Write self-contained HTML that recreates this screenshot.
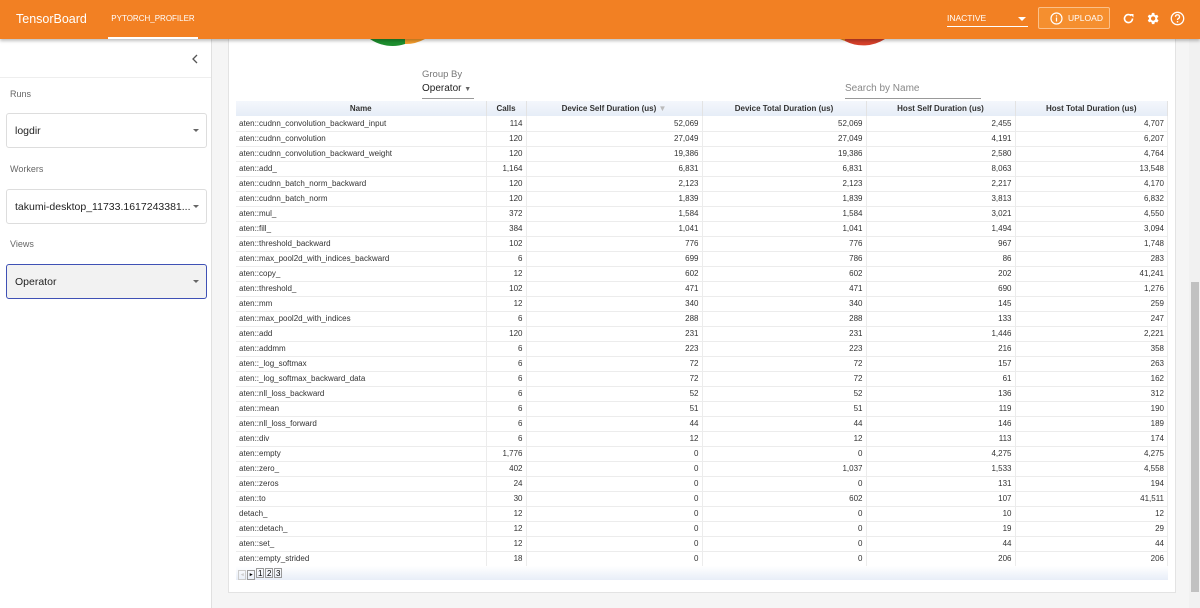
<!DOCTYPE html>
<html><head><meta charset="utf-8"><style>
*{box-sizing:border-box;margin:0;padding:0}
body{width:1200px;height:608px;overflow:hidden;background:#f5f5f5;font-family:"Liberation Sans",Arial,sans-serif;position:relative}
.hdr{position:absolute;left:0;top:0;width:1200px;height:39px;background:#f28023;box-shadow:0 2px 3px rgba(0,0,0,.25);z-index:5;color:#fff}
.logo{position:absolute;left:16px;top:12px;font-size:12.5px}
.tab{position:absolute;left:108px;top:0;width:90px;height:39px;font-size:8px;text-align:center;line-height:38px;border-bottom:2px solid #fff}
.inact{position:absolute;left:947px;top:13px;width:81px;height:14px;border-bottom:1px solid #fff;font-size:8.5px}
.inact:after{content:"";position:absolute;right:2px;top:4px;border:4px solid transparent;border-top-color:#fff}
.upl{position:absolute;left:1038px;top:7px;width:72px;height:22px;border:1px solid #fbc08a;background:#f58f2f;border-radius:2px;font-size:8.5px;line-height:20px;padding-left:29px}
.side{position:absolute;left:0;top:39px;width:212px;height:569px;background:#fff;border-right:1px solid #e0e0e0}
.lbl{position:absolute;left:10px;font-size:9px;color:#666}
.sel{position:absolute;left:6px;width:201px;height:35px;border:1px solid #ddd;border-radius:3px;font-size:10.5px;color:#222;line-height:35px;padding-left:8px}
.sel:after{content:"";position:absolute;right:7px;top:15px;border:3.5px solid transparent;border-top-color:#666}
.card{position:absolute;left:228px;top:39px;width:948px;height:554px;background:#fff;border:1px solid #e3e3e3;border-top:none}
table{position:absolute;left:236px;top:101px;width:932px;border-collapse:collapse;font-size:8px;color:#333}
th{height:15px;background:linear-gradient(#f4f7fc,#e6edf7);font-weight:bold;border-right:1px solid #e3e3e3;color:#333}
td{height:15px;border-bottom:1px solid #ececec;border-right:1px solid #ececec;padding:0 3px;text-align:right}
td:first-child{text-align:left}
.pg{position:absolute;left:236px;top:566px;width:932px;height:14px;background:linear-gradient(#fff,#e8eef8);font-size:8px}
.pg span{display:inline-block;border:1px solid #999;width:8px;height:10px;margin-top:2px;text-align:center;line-height:9px;margin-right:1px}
.sb{position:absolute;left:1189px;top:39px;width:11px;height:569px;background:#f1f1f1}
.th{position:absolute;left:1191px;top:282px;width:8px;height:310px;background:#c1c1c1}
</style></head><body>
<div class="hdr">
<div class="logo">TensorBoard</div>
<div class="tab">PYTORCH_PROFILER</div>
<div class="inact">INACTIVE</div>
<div class="upl"><svg style="position:absolute;left:11px;top:4px" width="13" height="13" viewBox="0 0 13 13"><circle cx="6.5" cy="6.5" r="5.5" fill="none" stroke="#fff" stroke-width="1.2"/><rect x="5.9" y="5.5" width="1.2" height="4" fill="#fff"/><rect x="5.9" y="3.3" width="1.2" height="1.2" fill="#fff"/></svg>UPLOAD</div>
<svg style="position:absolute;left:1122px;top:12px" width="13" height="13" viewBox="0 0 13 13"><path d="M10.5 6.5A4 4 0 1 1 9.3 3.7" fill="none" stroke="#fff" stroke-width="1.6"/><path d="M8 2h3.5v3.5z" fill="#fff"/></svg>
<svg style="position:absolute;left:1145px;top:11px" width="15" height="15" viewBox="0 0 24 24"><path fill="#fff" d="M19.4 13a7.5 7.5 0 0 0 0-2l2.1-1.6-2-3.5-2.5 1a7 7 0 0 0-1.7-1L15 3h-4l-.4 2.7a7 7 0 0 0-1.7 1l-2.5-1-2 3.5L6.5 11a7.5 7.5 0 0 0 0 2l-2.1 1.6 2 3.5 2.5-1a7 7 0 0 0 1.7 1L11 21h4l.4-2.7a7 7 0 0 0 1.7-1l2.5 1 2-3.5zM13 15.5a3.5 3.5 0 1 1 0-7 3.5 3.5 0 0 1 0 7z"/></svg>
<svg style="position:absolute;left:1170px;top:11px" width="15" height="15" viewBox="0 0 15 15"><circle cx="7.5" cy="7.5" r="6.2" fill="none" stroke="#fff" stroke-width="1.3"/><path d="M5.5 5.8a2 2 0 1 1 2.8 1.8c-.6.3-.8.7-.8 1.4" fill="none" stroke="#fff" stroke-width="1.3"/><circle cx="7.5" cy="10.8" r=".8" fill="#fff"/></svg>
</div>
<div class="side">
<svg style="position:absolute;left:191px;top:15px" width="8" height="10" viewBox="0 0 8 10"><path d="M6 1L2 5l4 4" fill="none" stroke="#555" stroke-width="1.3"/></svg>
<div style="position:absolute;left:0;top:38px;width:211px;border-top:1px solid #eee"></div>
<div class="lbl" style="top:50px">Runs</div>
<div class="sel" style="top:74px">logdir</div>
<div class="lbl" style="top:125px">Workers</div>
<div class="sel" style="top:150px">takumi-desktop_11733.1617243381...</div>
<div class="lbl" style="top:200px">Views</div>
<div class="sel" style="top:225px;border:1px solid #3f51b5;background:#f2f2f2">Operator</div>
</div>
<div class="card"></div>
<svg style="position:absolute;left:350px;top:39px" width="600" height="8"><path d="M20 0A40 40 0 0 0 55 5L55 0z" fill="#1e8e2e"/><path d="M55 0L55 5A40 40 0 0 0 75 0z" fill="#f39c2c"/><path d="M490 0A40 40 0 0 0 495 2L495 0z" fill="#e8901e"/><path d="M495 0L495 2A40 40 0 0 0 535 0z" fill="#d5402a"/></svg>
<div style="position:absolute;left:422px;top:69px;font-size:9.5px;color:#777">Group By</div>
<div style="position:absolute;left:422px;top:83px;width:52px;height:16px;border-bottom:1px solid #999;font-size:10px;color:#222">Operator <span style="font-size:7px;color:#666">▼</span></div>
<div style="position:absolute;left:845px;top:83px;width:136px;height:16px;border-bottom:1px solid #999;font-size:10px;color:#888">Search by Name</div>
<table>
<tr><th style="width:250px">Name</th><th style="width:40px">Calls</th><th style="width:176px">Device Self Duration (us) <span style="color:#bbb">▼</span></th><th style="width:164px">Device Total Duration (us)</th><th style="width:149px">Host Self Duration (us)</th><th>Host Total Duration (us)</th></tr>
<tr><td>aten::cudnn_convolution_backward_input</td><td>114</td><td>52,069</td><td>52,069</td><td>2,455</td><td>4,707</td></tr>
<tr><td>aten::cudnn_convolution</td><td>120</td><td>27,049</td><td>27,049</td><td>4,191</td><td>6,207</td></tr>
<tr><td>aten::cudnn_convolution_backward_weight</td><td>120</td><td>19,386</td><td>19,386</td><td>2,580</td><td>4,764</td></tr>
<tr><td>aten::add_</td><td>1,164</td><td>6,831</td><td>6,831</td><td>8,063</td><td>13,548</td></tr>
<tr><td>aten::cudnn_batch_norm_backward</td><td>120</td><td>2,123</td><td>2,123</td><td>2,217</td><td>4,170</td></tr>
<tr><td>aten::cudnn_batch_norm</td><td>120</td><td>1,839</td><td>1,839</td><td>3,813</td><td>6,832</td></tr>
<tr><td>aten::mul_</td><td>372</td><td>1,584</td><td>1,584</td><td>3,021</td><td>4,550</td></tr>
<tr><td>aten::fill_</td><td>384</td><td>1,041</td><td>1,041</td><td>1,494</td><td>3,094</td></tr>
<tr><td>aten::threshold_backward</td><td>102</td><td>776</td><td>776</td><td>967</td><td>1,748</td></tr>
<tr><td>aten::max_pool2d_with_indices_backward</td><td>6</td><td>699</td><td>786</td><td>86</td><td>283</td></tr>
<tr><td>aten::copy_</td><td>12</td><td>602</td><td>602</td><td>202</td><td>41,241</td></tr>
<tr><td>aten::threshold_</td><td>102</td><td>471</td><td>471</td><td>690</td><td>1,276</td></tr>
<tr><td>aten::mm</td><td>12</td><td>340</td><td>340</td><td>145</td><td>259</td></tr>
<tr><td>aten::max_pool2d_with_indices</td><td>6</td><td>288</td><td>288</td><td>133</td><td>247</td></tr>
<tr><td>aten::add</td><td>120</td><td>231</td><td>231</td><td>1,446</td><td>2,221</td></tr>
<tr><td>aten::addmm</td><td>6</td><td>223</td><td>223</td><td>216</td><td>358</td></tr>
<tr><td>aten::_log_softmax</td><td>6</td><td>72</td><td>72</td><td>157</td><td>263</td></tr>
<tr><td>aten::_log_softmax_backward_data</td><td>6</td><td>72</td><td>72</td><td>61</td><td>162</td></tr>
<tr><td>aten::nll_loss_backward</td><td>6</td><td>52</td><td>52</td><td>136</td><td>312</td></tr>
<tr><td>aten::mean</td><td>6</td><td>51</td><td>51</td><td>119</td><td>190</td></tr>
<tr><td>aten::nll_loss_forward</td><td>6</td><td>44</td><td>44</td><td>146</td><td>189</td></tr>
<tr><td>aten::div</td><td>6</td><td>12</td><td>12</td><td>113</td><td>174</td></tr>
<tr><td>aten::empty</td><td>1,776</td><td>0</td><td>0</td><td>4,275</td><td>4,275</td></tr>
<tr><td>aten::zero_</td><td>402</td><td>0</td><td>1,037</td><td>1,533</td><td>4,558</td></tr>
<tr><td>aten::zeros</td><td>24</td><td>0</td><td>0</td><td>131</td><td>194</td></tr>
<tr><td>aten::to</td><td>30</td><td>0</td><td>602</td><td>107</td><td>41,511</td></tr>
<tr><td>detach_</td><td>12</td><td>0</td><td>0</td><td>10</td><td>12</td></tr>
<tr><td>aten::detach_</td><td>12</td><td>0</td><td>0</td><td>19</td><td>29</td></tr>
<tr><td>aten::set_</td><td>12</td><td>0</td><td>0</td><td>44</td><td>44</td></tr>
<tr><td>aten::empty_strided</td><td>18</td><td>0</td><td>0</td><td>206</td><td>206</td></tr>
</table>
<div class="pg">&nbsp;<span style="border-color:#ccc;color:#ccc;font-size:5px">◄</span><span style="font-size:5px">►</span><span>1</span><span>2</span><span>3</span></div>
<div class="sb"></div><div class="th"></div>
</body></html>
